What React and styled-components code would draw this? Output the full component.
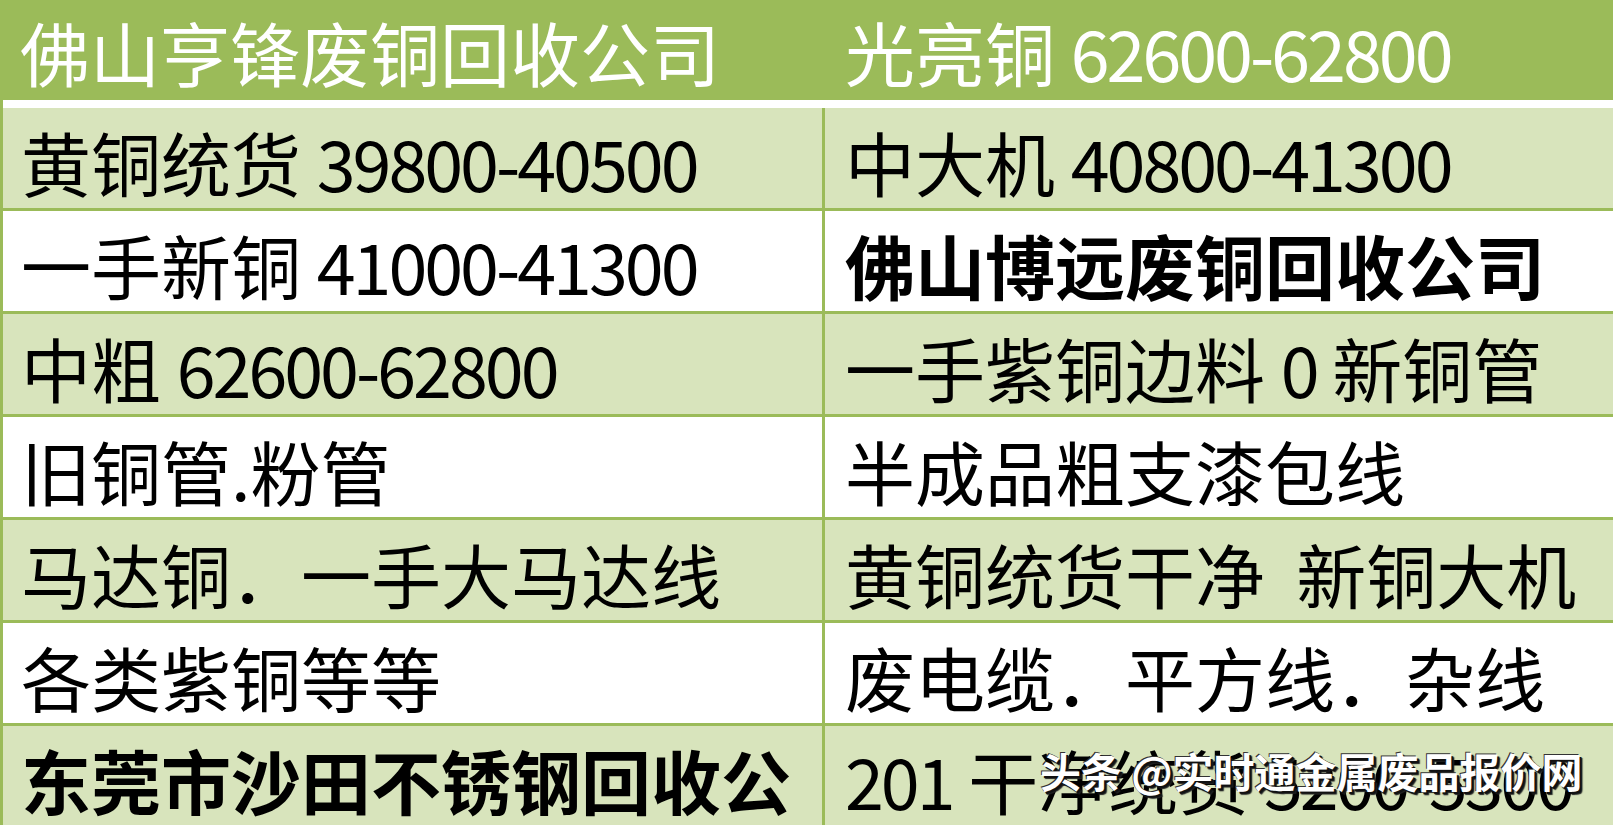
import React from "react";
import styled, { createGlobalStyle } from "styled-components";

const green = "#9bbb59";
const lightGreen = "#d8e4bc";

const GlobalStyle = createGlobalStyle`
  html, body {
    margin: 0;
    padding: 0;
    background: #fff;
    overflow: hidden;
  }
  body {
    font-family: "Noto Sans CJK SC", "Noto Sans", sans-serif;
  }
`;

const Page = styled.div`
  position: relative;
  width: 1613px;
  height: 825px;
  overflow: hidden;
  background: #fff;
`;

const HeaderRow = styled.div`
  display: flex;
  height: 100px;
  background: ${green};
  color: #fff;
`;

const HeaderCell = styled.div`
  display: flex;
  align-items: center;
  box-sizing: border-box;
  width: ${({ wide }) => (wide ? "825px" : "auto")};
  flex: ${({ wide }) => (wide ? "none" : 1)};
  padding-left: 20px;
  padding-top: 4px;
  font-size: 70px;
  line-height: 1;
  white-space: pre;
`;

const Body = styled.div`
  border-left: 3px solid ${green};
  padding-top: 8px;
`;

const Row = styled.div`
  display: flex;
  height: 100px;
  border-bottom: 3px solid ${green};
  background: ${({ shaded }) => (shaded ? lightGreen : "#fff")};
`;

const Cell = styled.div`
  display: flex;
  align-items: center;
  box-sizing: border-box;
  padding-left: 18px;
  padding-top: 8px;
  font-size: 70px;
  line-height: 1;
  color: #000;
  white-space: pre;
  font-weight: ${({ bold }) => (bold ? 700 : 400)};
`;

const LeftCell = styled(Cell)`
  width: 822px;
  flex: none;
  border-right: 3px solid ${green};
`;

const RightCell = styled(Cell)`
  flex: 1;
  padding-left: 20px;
`;

const Num = styled.span`
  letter-spacing: -3px;
`;

const Watermark = styled.div`
  position: absolute;
  left: 1040px;
  top: 746px;
  font-size: 41px;
  line-height: 1.2;
  font-weight: 700;
  color: #fff;
  white-space: pre;
  text-shadow: 2px 2px 0 #111, 3px 3px 1px #222, -1px -1px 0 #333;
`;

// digits get a tighter spacing, closer to the narrow figures of the original
const Text = ({ children }) =>
  children
    .split(/(\d[\d-]*\d|\d)/)
    .map((part, i) => (/^\d/.test(part) ? <Num key={i}>{part}</Num> : part));

const rows = [
  { left: "黄铜统货 39800-40500", right: "中大机 40800-41300" },
  { left: "一手新铜 41000-41300", right: "佛山博远废铜回收公司", rightBold: true },
  { left: "中粗 62600-62800", right: "一手紫铜边料 0 新铜管" },
  { left: "旧铜管.粉管", right: "半成品粗支漆包线" },
  { left: "马达铜．一手大马达线", right: "黄铜统货干净  新铜大机" },
  { left: "各类紫铜等等", right: "废电缆．平方线．杂线" },
  { left: "东莞市沙田不锈钢回收公", leftBold: true, right: "201 干净统货 5200-5300" },
];

export default function App() {
  return (
    <Page>
      <GlobalStyle />
      <HeaderRow>
        <HeaderCell wide>佛山亨锋废铜回收公司</HeaderCell>
        <HeaderCell>
          <Text>光亮铜 62600-62800</Text>
        </HeaderCell>
      </HeaderRow>
      <Body>
        {rows.map((r, i) => (
          <Row key={i} shaded={i % 2 === 0}>
            <LeftCell bold={r.leftBold}>
              <Text>{r.left}</Text>
            </LeftCell>
            <RightCell bold={r.rightBold}>
              <Text>{r.right}</Text>
            </RightCell>
          </Row>
        ))}
      </Body>
      <Watermark>头条 @实时通金属废品报价网</Watermark>
    </Page>
  );
}
